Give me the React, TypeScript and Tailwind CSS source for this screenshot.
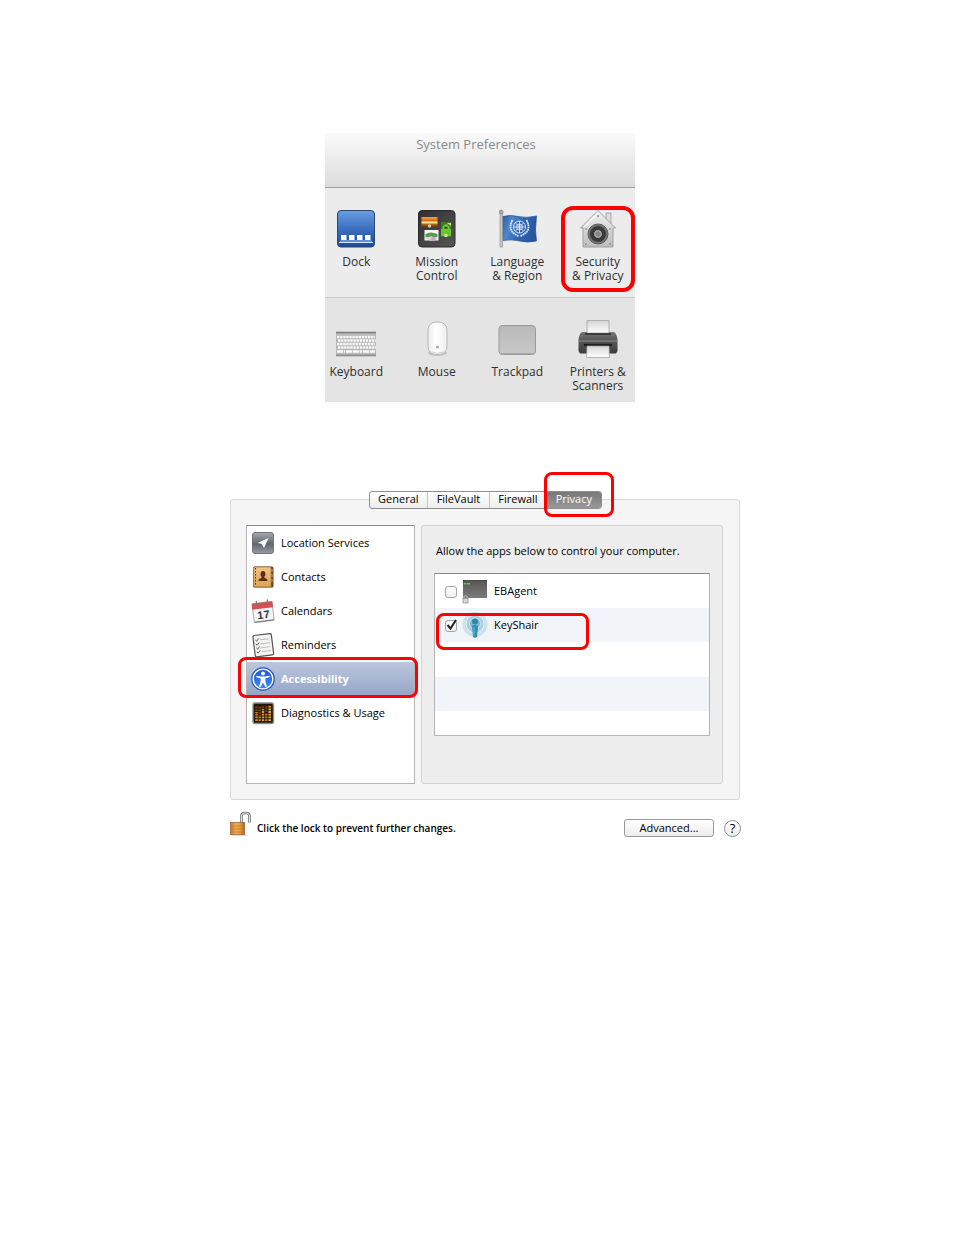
import React, { useState } from 'react';
import clsx from 'clsx';

const DockIcon: React.FC = () => (
  <svg width="40" height="40" viewBox="0 0 40 40" aria-hidden="true">
    <defs>
      <linearGradient id="dock" x1="0" y1="0" x2="0" y2="1">
        <stop offset="0" stopColor="#6a9fe0" />
        <stop offset="0.5" stopColor="#3a70c0" />
        <stop offset="1" stopColor="#1d4a9b" />
      </linearGradient>
    </defs>
    <rect x="1.5" y="1.5" width="37" height="36.5" rx="3.5" fill="url(#dock)" stroke="#2b4570" />
    <path d="M5 31h30l2 3H3z" fill="#5d93dc" />
    <path d="M3 33.5h34" stroke="#d5e6fb" strokeWidth="1.2" />
    <path d="M5 26h5.500v5H5zM13 26h5.500v5H13zM21 26h5.500v5H21zM29 26h5.500v5H29z" fill="#fff" />
  </svg>
);

const MissionIcon: React.FC = () => (
  <svg width="40" height="40" viewBox="0 0 40 40" aria-hidden="true">
    <defs>
      <linearGradient id="mission" x1="0" y1="0" x2="1" y2="1">
        <stop offset="0" stopColor="#303030" />
        <stop offset="1" stopColor="#555" />
      </linearGradient>
      <linearGradient id="sunset" x1="0" y1="0" x2="0" y2="1">
        <stop offset="0" stopColor="#f2a440" />
        <stop offset="0.35" stopColor="#d8701c" />
        <stop offset="0.55" stopColor="#fbe6a0" />
        <stop offset="0.75" stopColor="#b0601c" />
        <stop offset="1" stopColor="#6a3010" />
      </linearGradient>
    </defs>
    <rect x="1.5" y="1.5" width="36.500" height="36.500" rx="3.500" fill="url(#mission)" stroke="#2a2a2a" />
    <rect x="4.500" y="8" width="16" height="10" fill="url(#sunset)" />
    <circle cx="12.500" cy="17" r="1.700" fill="#dfc6b0" />
    <rect x="24" y="13" width="10" height="15" fill="#357f22" />
    <path d="M25.500 18q3.500-6 7 0v2h1.500v7H24v-7h1.500z" fill="#6cc42f" />
    <path d="M27 19.500q2-4 4 0z" fill="#1b3812" />
    <path d="M30 14h4v3z" fill="#c8e08c" />
    <circle cx="29" cy="26.500" r="1.800" fill="#c5ee9c" />
    <rect x="7.500" y="21" width="14" height="10.500" fill="#f3f8f1" />
    <path d="M8.500 25q5-3 12 0v3h-12z" fill="#559b50" />
    <path d="M8.500 28h12v2.500h-12z" fill="#cfe3cc" />
    <circle cx="14" cy="29.500" r="2.300" fill="#e2c8e2" />
    <circle cx="16.500" cy="30" r="2.300" fill="#c9a3c8" />
  </svg>
);

const FlagIcon: React.FC = () => (
  <svg width="40" height="40" viewBox="0 0 40 40" aria-hidden="true">
    <defs>
      <linearGradient id="flag" x1="0" y1="0" x2="1" y2="0.3">
        <stop offset="0" stopColor="#285ba8" />
        <stop offset="0.3" stopColor="#4e86cc" />
        <stop offset="0.6" stopColor="#3268b4" />
        <stop offset="1" stopColor="#2857a0" />
      </linearGradient>
    </defs>
    <path d="M5.500 7.500q8-2 16 0t18-.5l-1 14 1 11q-9 2-17 0t-17-.500z" fill="url(#flag)" stroke="#244e8d" strokeWidth="0.700" />
    <path d="M3 4h2.500v34H3z" fill="#c8c8c8" stroke="#929292" strokeWidth="0.700" />
    <circle cx="4.200" cy="3" r="2" fill="#aaa" stroke="#777" strokeWidth="0.600" />
    <g fill="none" stroke="#dce9fa" strokeWidth="0.900">
      <circle cx="22.500" cy="18" r="6" />
      <circle cx="22.500" cy="18" r="3" />
      <path d="M22.500 12v12M16.500 18h12M18.500 14l8 8M26.500 14l-8 8" />
      <path d="M15.500 11q-6 11 6 16M29.500 11q6 11-6 16" strokeWidth="1.800" strokeDasharray="1.800 0.500" />
    </g>
  </svg>
);

const SecurityIcon: React.FC = () => (
  <svg width="40" height="40" viewBox="0 0 40 40" aria-hidden="true">
    <defs>
      <linearGradient id="house" x1="0" y1="0" x2="0" y2="1">
        <stop offset="0" stopColor="#f1f1f1" />
        <stop offset="1" stopColor="#bdbdbd" />
      </linearGradient>
    </defs>
    <path d="M28 4h5v12h-5z" fill="#ddd" stroke="#999" strokeWidth="0.800" />
    <path d="M20 1.500 2.500 19H5v19h30V19h2.500z" fill="url(#house)" stroke="#999" strokeWidth="0.900" />
    <path d="M20 4 6 18" stroke="#fff" strokeWidth="1.500" />
    <g fill="#777">
      <circle cx="20" cy="7" r="0.900" />
      <circle cx="8" cy="20" r="0.800" />
      <circle cx="32" cy="20" r="0.800" />
      <circle cx="8" cy="35" r="0.800" />
      <circle cx="32" cy="35" r="0.800" />
    </g>
    <circle cx="20" cy="25" r="10" fill="#777" stroke="#5a5a5a" />
    <circle cx="20" cy="25" r="8" fill="#3a3a3a" stroke="#5d5d5d" strokeWidth="1" strokeDasharray="1 1.500" />
    <circle cx="20" cy="25" r="4.500" fill="#a5a5a5" stroke="#2e2e2e" />
    <circle cx="20" cy="25" r="2.500" fill="#858585" />
  </svg>
);

const keyRows = [18, 21.5, 25, 28.5];

const KeyboardIcon: React.FC = () => (
  <svg width="42" height="40" viewBox="0 0 42 40" aria-hidden="true">
    <path d="M1 13h40v24H1z" fill="#b8b8b8" />
    <path d="M1 13.500h40" stroke="#7e7e7e" strokeWidth="1.500" />
    <path d="M1 36.500h40" stroke="#888" strokeWidth="1.500" />
    <g stroke="#fafafa" strokeWidth="2.500">
      {keyRows.map((y, i) => (
        <path key={y} d={`M${2 + (i % 2)} ${y}h38`} strokeDasharray="2.3 0.8" />
      ))}
      <path d="M2 32.500h8M11 32.500h16M28 32.500h12" strokeDasharray="6 0.8" />
    </g>
  </svg>
);

const MouseIcon: React.FC = () => (
  <svg width="40" height="40" viewBox="0 0 40 40" aria-hidden="true">
    <defs>
      <linearGradient id="mouse" x1="0" y1="0" x2="1" y2="0">
        <stop offset="0" stopColor="#ececec" />
        <stop offset="0.4" stopColor="#fff" />
        <stop offset="1" stopColor="#ededed" />
      </linearGradient>
    </defs>
    <ellipse cx="20.500" cy="34" rx="9.500" ry="3" fill="#c4c4c4" />
    <rect x="11" y="3" width="19" height="32.500" rx="8" fill="url(#mouse)" stroke="#b2b2b2" strokeWidth="0.900" />
    <circle cx="20.500" cy="28" r="1.500" fill="#a8a8a8" />
    <path d="M14.500 33q6 2.500 12 0" fill="none" stroke="#d0d0d0" />
  </svg>
);

const TrackpadIcon: React.FC = () => (
  <svg width="40" height="40" viewBox="0 0 40 40" aria-hidden="true">
    <defs>
      <linearGradient id="pad" x1="0" y1="0" x2="0" y2="1">
        <stop offset="0" stopColor="#b8b8b8" />
        <stop offset="1" stopColor="#c9c9c9" />
      </linearGradient>
    </defs>
    <rect x="2" y="6.500" width="36.500" height="29" rx="3.500" fill="url(#pad)" stroke="#999" />
    <path d="M4 34.500h33" stroke="#aaa" />
  </svg>
);

const PrinterIcon: React.FC = () => (
  <svg width="42" height="40" viewBox="0 0 42 40" aria-hidden="true">
    <defs>
      <linearGradient id="printer" x1="0" y1="0" x2="0" y2="1">
        <stop offset="0" stopColor="#777" />
        <stop offset="0.35" stopColor="#5a5a5a" />
        <stop offset="1" stopColor="#3c3c3c" />
      </linearGradient>
      <linearGradient id="paper" x1="0" y1="0" x2="0" y2="1">
        <stop offset="0" stopColor="#d5d5d5" />
        <stop offset="1" stopColor="#fff" />
      </linearGradient>
    </defs>
    <path d="M5 13h32q3 2 3.500 8v11l-1.500 2.500H3L1.500 32V21Q2 15 5 13z" fill="url(#printer)" />
    <path d="M10 1.500h22V14H10z" fill="url(#paper)" stroke="#999" strokeWidth="0.700" />
    <path d="M8 15h26" stroke="#2b2b2b" strokeWidth="1.500" />
    <path d="M2 22h38" stroke="#8d8d8d" />
    <path d="M7 26h28" stroke="#1e1e1e" strokeWidth="2.500" />
    <path d="M10 27h22l.5 11.500h-23z" fill="url(#paper)" stroke="#999" strokeWidth="0.700" />
  </svg>
);

const LocationIcon: React.FC = () => (
  <svg width="24" height="24" viewBox="0 0 24 24" aria-hidden="true">
    <defs>
      <linearGradient id="loc" x1="0" y1="0" x2="0" y2="1">
        <stop offset="0" stopColor="#a6a9ae" />
        <stop offset="0.55" stopColor="#61656e" />
        <stop offset="1" stopColor="#989ca3" />
      </linearGradient>
    </defs>
    <rect x="1.500" y="1.500" width="21" height="21" rx="2.500" fill="url(#loc)" stroke="#70747b" />
    <path d="M17.500 7 6.500 12l4 .8L13 17z" fill="#fff" />
  </svg>
);

const ContactsIcon: React.FC = () => (
  <svg width="24" height="24" viewBox="0 0 24 24" aria-hidden="true">
    <defs>
      <linearGradient id="contacts" x1="0" y1="0" x2="0" y2="1">
        <stop offset="0" stopColor="#f0c486" />
        <stop offset="1" stopColor="#dca355" />
      </linearGradient>
    </defs>
    <rect x="2" y="1.500" width="20.500" height="21" rx="1.500" fill="#6d4223" />
    <rect x="2.500" y="2" width="17.500" height="20" rx="1" fill="url(#contacts)" stroke="#a97738" strokeWidth="0.800" />
    <path d="M4.500 3v18" stroke="#4d3219" strokeDasharray="1.500 1.500" />
    <path d="M21 4v3M21 9v3M21 14v3" stroke="#d6a472" />
    <path d="M12 6c3 0 3 4.500 1.200 6 0 1.500 3.300 1 3.300 4h-9c0-3 3.300-2.500 3.300-4C9 10.500 9 6 12 6z" fill="#5c2d16" />
  </svg>
);

const CalendarIcon: React.FC = () => (
  <svg width="24" height="24" viewBox="0 0 24 24" aria-hidden="true">
    <g transform="rotate(-7 12 12)">
      <rect x="2" y="3.500" width="20" height="19" rx="1" fill="#f5f5f5" stroke="#999" strokeWidth="0.800" />
      <path d="M1.600 3.500h20.800v6H1.600z" fill="#d05252" />
      <path d="M2 22h20" stroke="#777" />
      <path d="M6.500 1v5M17.500 1v5" stroke="#777" strokeWidth="1.200" />
      <text x="12" y="19.500" textAnchor="middle" fontSize="11" fontWeight="700" fill="#333" fontFamily="Liberation Sans, sans-serif">
        17
      </text>
    </g>
  </svg>
);

const RemindersIcon: React.FC = () => (
  <svg width="24" height="24" viewBox="0 0 24 24" aria-hidden="true">
    <g transform="rotate(-7 12 12)">
      <rect x="3" y="1.500" width="18.500" height="21.500" rx="1.500" fill="#f4f4f2" stroke="#555" strokeWidth="1.200" />
      <path d="M10 6.500h9M10 10.500h9M10 14.500h9M10 18.500h9" stroke="#bbb" />
      <path d="m5 6 1.200 1.500L8.500 5M5 10l1.200 1.500L8.500 9M5 14l1.200 1.500L8.500 13M5 18l1.200 1.500L8.500 17" fill="none" stroke="#555" strokeWidth="0.900" />
    </g>
  </svg>
);

const AccessibilityIcon: React.FC = () => (
  <svg width="24" height="24" viewBox="0 0 24 24" aria-hidden="true">
    <defs>
      <linearGradient id="access" x1="0" y1="0" x2="0" y2="1">
        <stop offset="0" stopColor="#2359d6" />
        <stop offset="1" stopColor="#3d8bf5" />
      </linearGradient>
    </defs>
    <circle cx="12" cy="12" r="11.800" fill="#1f50c4" />
    <circle cx="12" cy="12" r="9.900" fill="url(#access)" stroke="#fff" strokeWidth="1.400" />
    <circle cx="12" cy="6.500" r="1.900" fill="#fff" />
    <path d="M5.500 8.800 10 9.400h4l4.500-.6.200 1.500-4.300 1v3l1.600 5.200-1.500.6L12 15.500 9.500 20.100 8 19.500l1.600-5.200v-3l-4.300-1z" fill="#fff" />
  </svg>
);

const DiagnosticsIcon: React.FC = () => (
  <svg width="24" height="24" viewBox="0 0 24 24" aria-hidden="true">
    <rect x="2" y="2" width="20.500" height="20.500" rx="2" fill="#251808" stroke="#8c8c8c" strokeWidth="1.400" />
    <g strokeWidth="2.400" strokeDasharray="1.800 0.900">
      <path d="M5.500 20V11M12 20V8" stroke="#e5961f" />
      <path d="M8.700 20v-6M15.300 20v-8" stroke="#c9781b" />
      <path d="M18.700 20V5" stroke="#f5b13d" />
      <path d="M5.500 10V5M8.700 13V5M12 7V5M15.300 11V5" stroke="#6d4418" />
    </g>
  </svg>
);

const AgentIcon: React.FC = () => (
  <svg width="26" height="26" viewBox="0 0 26 26" aria-hidden="true">
    <defs>
      <linearGradient id="agent" x1="0" y1="0" x2="0" y2="1">
        <stop offset="0" stopColor="#555" />
        <stop offset="1" stopColor="#7c7c7c" />
      </linearGradient>
    </defs>
    <rect x="1" y="2" width="24" height="18" fill="url(#agent)" />
    <path d="M1 2.500h24" stroke="#4a4a4a" />
    <path d="M2 5h2.500v1.500H2zM5 5h3v1.500H5z" fill="#5fd03a" />
    <path d="M1.800 21v-1.500a1.800 1.800 0 0 1 3.600 0V21" fill="none" stroke="#bbb" />
    <rect x="1" y="20.500" width="5" height="4.500" fill="#d8d8d8" stroke="#888" strokeWidth="0.700" />
  </svg>
);

const KeyShairIcon: React.FC = () => (
  <svg width="26" height="26" viewBox="0 0 26 26" aria-hidden="true">
    <circle cx="13" cy="12.500" r="12.500" fill="#cbe2ec" />
    <circle cx="13" cy="12" r="9" fill="#a9cfdf" stroke="#e8f4f9" />
    <circle cx="13" cy="11.500" r="5.500" fill="#80b7ce" stroke="#d6ebf4" />
    <circle cx="13" cy="9.500" r="3" fill="#2f86aa" />
    <path d="M10 14q3-2 6 0l-1 11q-2 1.500-4 0z" fill="#2f8cb2" />
    <path d="M12 15v9" stroke="#75b9d2" />
  </svg>
);

const LockIcon: React.FC = () => (
  <svg width="22" height="26" viewBox="0 0 22 26" aria-hidden="true">
    <defs>
      <linearGradient id="lock" x1="0" y1="0" x2="1" y2="0">
        <stop offset="0" stopColor="#c5762c" />
        <stop offset="0.4" stopColor="#f0b25c" />
        <stop offset="0.75" stopColor="#e09540" />
        <stop offset="1" stopColor="#a65c1c" />
      </linearGradient>
    </defs>
    <ellipse cx="9" cy="24" rx="9" ry="1.500" fill="#ddd" />
    <path d="M11.500 12V5q0-3 3-3h2q3 0 3 3v6.500" fill="none" stroke="#777" strokeWidth="2.600" />
    <path d="M11.500 12V5q0-3 3-3h2q3 0 3 3v6" fill="none" stroke="#ddd" strokeWidth="1" />
    <rect x="0.500" y="11.500" width="14" height="12" fill="url(#lock)" stroke="#9d5c20" strokeWidth="0.700" />
    <path d="M1 15h13M1 18h13M1 21h13" stroke="#c57a2c" strokeWidth="0.700" />
  </svg>
);

const prefRows = [
  [
    { label: ['Dock'], icon: <DockIcon /> },
    { label: ['Mission', 'Control'], icon: <MissionIcon /> },
    { label: ['Language', '& Region'], icon: <FlagIcon /> },
    { label: ['Security', '& Privacy'], icon: <SecurityIcon />, marked: true },
  ],
  [
    { label: ['Keyboard'], icon: <KeyboardIcon /> },
    { label: ['Mouse'], icon: <MouseIcon /> },
    { label: ['Trackpad'], icon: <TrackpadIcon /> },
    { label: ['Printers &', 'Scanners'], icon: <PrinterIcon /> },
  ],
];

const tabs = ['General', 'FileVault', 'Firewall', 'Privacy'];

const services = [
  { name: 'Location Services', icon: <LocationIcon /> },
  { name: 'Contacts', icon: <ContactsIcon /> },
  { name: 'Calendars', icon: <CalendarIcon /> },
  { name: 'Reminders', icon: <RemindersIcon /> },
  { name: 'Accessibility', icon: <AccessibilityIcon /> },
  { name: 'Diagnostics & Usage', icon: <DiagnosticsIcon /> },
];

const Marker: React.FC<{ className: string }> = ({ className }) => (
  <span className={clsx('pointer-events-none absolute z-20 border-[#fe0000]', className)} />
);

const SystemPreferences: React.FC = () => (
  <section className="w-full max-w-[310px] bg-[#ececec] text-[#2e2e2e]">
    <h2 className="h-[55px] border-b border-[#a0a3a0] bg-linear-to-b from-[#fafafa] to-[#dcdcdc] pt-[3px] pr-2 text-center text-[13px] leading-4 text-[#8a8a8a]">
      System Preferences
    </h2>
    {prefRows.map((row, i) => (
      <div
        key={i}
        className={clsx('pt-[21px]', i === 0 ? 'h-[110px] border-b border-[#cacaca]' : 'h-[104px] bg-[#e4e4e4]')}
      >
        <div className="-mr-[3px] -ml-[9px] grid grid-cols-4">
          {row.map((item) => (
            <button key={item.label[0]} type="button" className="relative flex flex-col items-center gap-1.5 text-xs leading-[14px]">
              {item.icon}
              <span>
                {item.label.map((line) => (
                  <span key={line} className="block whitespace-nowrap">
                    {line}
                  </span>
                ))}
              </span>
              {'marked' in item && <Marker className="-top-[3px] right-[3px] left-[3px] h-[86px] rounded-xl border-4" />}
            </button>
          ))}
        </div>
      </div>
    ))}
  </section>
);

const SecurityPane: React.FC = () => {
  const [tab, setTab] = useState('Privacy');
  const [service, setService] = useState('Accessibility');
  const [allowed, setAllowed] = useState<Record<string, boolean>>({ EBAgent: false, KeyShair: true });

  const apps = [
    { name: 'EBAgent', icon: <AgentIcon /> },
    { name: 'KeyShair', icon: <KeyShairIcon /> },
  ];

  return (
    <section className="w-full max-w-[510px] text-[11px] text-black">
      <div role="tablist" className="relative z-10 mx-auto -mb-[10px] flex h-[18px] w-[233px] rounded-[3px] border border-[#8f8f8f] bg-linear-to-b from-white to-[#ededed]">
        {tabs.map((name) => (
          <button
            key={name}
            type="button"
            role="tab"
            aria-selected={tab === name}
            onClick={() => setTab(name)}
            className={clsx(
              'relative grow pb-0.5 leading-[14px]',
              tab === name ? 'rounded-r-[2px] bg-linear-to-b from-[#777] to-[#999] text-white' : 'border-r border-[#c4c4c4]',
            )}
          >
            {name}
            {name === 'Privacy' && <Marker className="-top-5 -right-[13px] -left-[3px] h-[45px] rounded-lg border-[3px]" />}
          </button>
        ))}
      </div>

      <div className="flex gap-1.5 rounded-[3px] border border-[#d9d9d9] bg-[#f5f5f5] pt-[25px] pr-4 pb-[15px] pl-[15px]">
        <ul className="min-h-[259px] w-[169px] shrink-0 border border-[#b5b5b5] border-t-[#8a8a8a] bg-white">
          {services.map((item) => (
            <li key={item.name} className="relative">
              <button
                type="button"
                onClick={() => setService(item.name)}
                className={clsx(
                  'flex h-[34px] w-full items-center gap-1.5 pl-1 text-left',
                  service === item.name && 'bg-linear-to-b from-[#bcc7de] to-[#95a5c6] font-bold text-white',
                )}
              >
                {item.icon}
                {item.name}
              </button>
              {item.name === 'Accessibility' && <Marker className="-top-[5px] -right-1 -left-[9px] h-[41px] rounded-lg border-[3px]" />}
            </li>
          ))}
        </ul>

        <div className="grow rounded-[3px] border border-[#d2d2d2] bg-[#ededed] px-3 pt-[17px]">
          <h3 className="pl-0.5 font-medium leading-4">Allow the apps below to control your computer.</h3>
          <ul className="mt-3.5 h-[163px] border border-[#b5b5b5] border-t-[#8a8a8a] bg-white">
            {apps.map((app) => (
              <li key={app.name} className="relative flex h-[34px] items-center even:bg-[#f1f5fa]">
                <label className="flex items-center pl-2.5">
                  <span className="relative mt-0.5 size-3">
                    <input
                      type="checkbox"
                      checked={allowed[app.name]}
                      onChange={(e) => setAllowed({ ...allowed, [app.name]: e.target.checked })}
                      className="block size-3 appearance-none rounded-[3px] border border-[#a5a5a5] bg-linear-to-b from-white to-[#eee]"
                    />
                    {allowed[app.name] && (
                      <svg className="pointer-events-none absolute -top-0.5 left-0" width="14" height="14" viewBox="0 0 14 14" aria-hidden="true">
                        <path d="m2.500 7 3 3.500L11 2" fill="none" stroke="#222" strokeWidth="2" />
                      </svg>
                    )}
                  </span>
                  <span className="mr-1.5 ml-[5px]">{app.icon}</span>
                  {app.name}
                </label>
                {app.name === 'KeyShair' && <Marker className="top-[5px] left-[1px] h-[37px] w-[153px] rounded-lg border-[3px]" />}
              </li>
            ))}
            <li className="h-[35px]" />
            <li className="h-[34px] bg-[#f1f5fa]" />
          </ul>
        </div>
      </div>

      <div className="mt-[11px] flex items-center">
        <LockIcon />
        <p className="mt-2 ml-[5px] text-[10px] font-semibold leading-4">Click the lock to prevent further changes.</p>
        <button type="button" className="mt-2 ml-auto h-[18px] w-[90px] rounded-[3px] border border-[#999] bg-linear-to-b from-white to-[#ececec] leading-4">
          Advanced...
        </button>
        <button
          type="button"
          aria-label="Help"
          className="mt-2 -mr-px ml-2.5 flex size-[17px] items-center justify-center rounded-full border border-[#8f8f8f] bg-linear-to-b from-white to-[#eee] text-[13px] leading-4"
        >
          ?
        </button>
      </div>
    </section>
  );
};

const App: React.FC = () => (
  <main className="min-h-screen bg-white pt-[133px] pb-16 font-['Open_Sans','Noto_Sans',sans-serif]">
    <div className="flex justify-center pl-1.5">
      <SystemPreferences />
    </div>
    <div className="mt-[89px] flex justify-center pl-4">
      <SecurityPane />
    </div>
  </main>
);

export default App;
